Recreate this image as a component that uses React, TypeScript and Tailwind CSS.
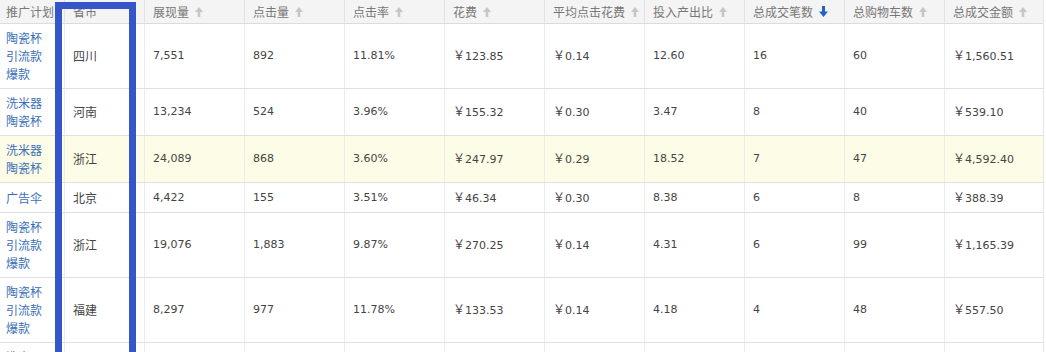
import React from "react";

const cjk = "[font-family:'Noto_Sans_CJK_SC','Microsoft_YaHei',sans-serif]";

type Row = {
  plan: string[];
  prov: string;
  vals: string[];
  hl?: boolean;
};

const rows: Row[] = [
  { plan: ["陶瓷杯", "引流款", "爆款"], prov: "四川", vals: ["7,551", "892", "11.81%", "￥123.85", "￥0.14", "12.60", "16", "60", "￥1,560.51"] },
  { plan: ["洗米器", "陶瓷杯"], prov: "河南", vals: ["13,234", "524", "3.96%", "￥155.32", "￥0.30", "3.47", "8", "40", "￥539.10"] },
  { plan: ["洗米器", "陶瓷杯"], prov: "浙江", vals: ["24,089", "868", "3.60%", "￥247.97", "￥0.29", "18.52", "7", "47", "￥4,592.40"], hl: true },
  { plan: ["广告伞"], prov: "北京", vals: ["4,422", "155", "3.51%", "￥46.34", "￥0.30", "8.38", "6", "8", "￥388.39"] },
  { plan: ["陶瓷杯", "引流款", "爆款"], prov: "浙江", vals: ["19,076", "1,883", "9.87%", "￥270.25", "￥0.14", "4.31", "6", "99", "￥1,165.39"] },
  { plan: ["陶瓷杯", "引流款", "爆款"], prov: "福建", vals: ["8,297", "977", "11.78%", "￥133.53", "￥0.14", "4.18", "4", "48", "￥557.50"] },
  { plan: ["洗米器", "陶瓷杯", "爆款"], prov: "浙江", vals: ["6,120", "402", "6.57%", "￥98.20", "￥0.24", "3.12", "3", "21", "￥306.40"] },
];

const headers = ["展现量", "点击量", "点击率", "花费", "平均点击花费", "投入产出比", "总成交笔数", "总购物车数", "总成交金额"];

function UpArrow() {
  return (
    <svg width="8" height="10" viewBox="0 0 8 10" className="ml-[6px] shrink-0">
      <path d="M4 0 L8 5 H5.3 V10 H2.7 V5 H0 Z" fill="#c6c6c6" />
    </svg>
  );
}

function DownArrow() {
  return (
    <svg width="9" height="11" viewBox="0 0 9 11" className="ml-[6px] shrink-0">
      <path d="M3 0 H6 V5.5 H9 L4.5 11 L0 5.5 H3 Z" fill="#1e63c6" />
    </svg>
  );
}

function Val({ v }: { v: string }) {
  if (v.startsWith("￥")) {
    return (
      <span>
        <span className={`${cjk} text-[12px]`}>￥</span>
        {v.slice(1)}
      </span>
    );
  }
  return <span>{v}</span>;
}

export default function App() {
  return (
    <div className="relative h-[352px] w-[1046px] overflow-hidden bg-white">
      <div className="w-[1044px] border-r border-[#e6e6e6] text-[#444] [font-family:'DejaVu_Sans',sans-serif] text-[11px]">
        {/* header */}
        <div className="flex h-[24px] border-b border-[#dcdcdc] bg-[#f4f4f4] text-[#777]">
          <div className={`${cjk} flex w-[64px] shrink-0 items-center whitespace-nowrap pl-[6px] text-[12px]`}>推广计划</div>
          <div className={`${cjk} flex w-[80px] shrink-0 items-center border-l border-[#e3e3e3] pl-[8px] text-[12px]`}>省市</div>
          {headers.map((h, i) => (
            <div
              key={h}
              className={`${cjk} flex w-[100px] shrink-0 items-center border-l border-[#e3e3e3] pl-[8px] text-[12px]`}
            >
              {h}
              {i === 6 ? <DownArrow /> : <UpArrow />}
            </div>
          ))}
        </div>
        {/* body */}
        {rows.map((r, ri) => (
          <div
            key={ri}
            className={`flex min-h-[30px] border-b border-[#e0e0e0] ${r.hl ? "bg-[#fdfde7]" : "bg-white"}`}
          >
            <div className={`${cjk} flex w-[64px] shrink-0 flex-col justify-center py-[5px] pl-[6px] text-[12px] leading-[18px] text-[#3a6fb8]`}>
              {r.plan.map((p, pi) => (
                <div key={pi}>{p}</div>
              ))}
            </div>
            <div className={`${cjk} flex w-[80px] shrink-0 items-center border-l border-[#ececec] pl-[8px] text-[12px] leading-[18px]`}>
              {r.prov}
            </div>
            {r.vals.map((v, vi) => (
              <div
                key={vi}
                className="flex w-[100px] shrink-0 items-center border-l border-[#ececec] pl-[8px] leading-[18px]"
              >
                <Val v={v} />
              </div>
            ))}
          </div>
        ))}
      </div>
      {/* highlight box overlay */}
      <div className="pointer-events-none absolute left-[55px] top-[2px] h-[400px] w-[81px] border-[7px] border-[#3556c9]" />
    </div>
  );
}
